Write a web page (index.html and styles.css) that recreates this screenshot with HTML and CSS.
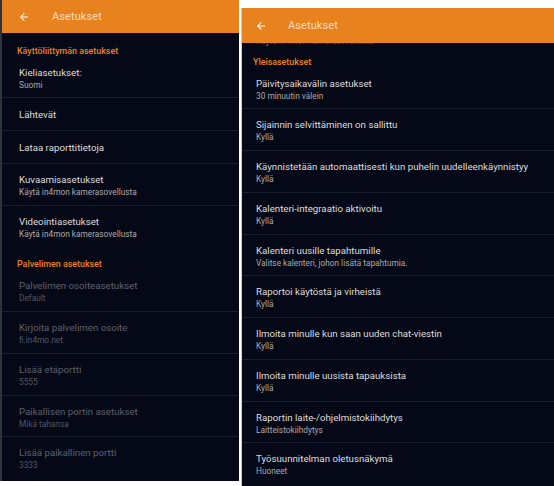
FILE: index.html
```html
<!DOCTYPE html>
<html lang="fi">
<head>
<meta charset="utf-8">
<title>Asetukset</title>
<link rel="stylesheet" href="styles.css">
</head>
<body>
<div class="page">
  <div class="phone phone-left">
    <header class="bar">
      <svg class="back" viewBox="0 0 24 24"><path d="M20 11H7.83l5.59-5.59L12 4l-8 8 8 8 1.41-1.41L7.83 13H20v-2z"/></svg>
      <span class="bar-title">Asetukset</span>
    </header>
    <div class="list">
      <div class="section">Käyttöliittymän asetukset</div>
      <div class="item"><div class="t">Kieliasetukset:</div><div class="s">Suomi</div></div>
      <div class="item single"><div class="t">Lähtevät</div></div>
      <div class="item single"><div class="t">Lataa raporttitietoja</div></div>
      <div class="item"><div class="t">Kuvaamisasetukset</div><div class="s">Käytä in4mon kamerasovellusta</div></div>
      <div class="item"><div class="t">Videointiasetukset</div><div class="s">Käytä in4mon kamerasovellusta</div></div>
      <div class="section">Palvelimen asetukset</div>
      <div class="item off"><div class="t">Palvelimen osoiteasetukset</div><div class="s">Default</div></div>
      <div class="item off"><div class="t">Kirjoita palvelimen osoite</div><div class="s">fi.in4mo.net</div></div>
      <div class="item off"><div class="t">Lisää etäportti</div><div class="s">5555</div></div>
      <div class="item off"><div class="t">Paikallisen portin asetukset</div><div class="s">Mikä tahansa</div></div>
      <div class="item off"><div class="t">Lisää paikallinen portti</div><div class="s">3333</div></div>
    </div>
  </div>
  <div class="phone phone-right">
    <header class="bar">
      <svg class="back" viewBox="0 0 24 24"><path d="M20 11H7.83l5.59-5.59L12 4l-8 8 8 8 1.41-1.41L7.83 13H20v-2z"/></svg>
      <span class="bar-title">Asetukset</span>
    </header>
    <div class="list">
      <div class="cutline"><div class="s">Käytä in4mon kamerasovellusta</div></div>
      <div class="section">Yleisasetukset</div>
      <div class="item"><div class="t">Päivitysaikavälin asetukset</div><div class="s">30 minuutin välein</div></div>
      <div class="item"><div class="t">Sijainnin selvittäminen on sallittu</div><div class="s">Kyllä</div></div>
      <div class="item"><div class="t">Käynnistetään automaattisesti kun puhelin uudelleenkäynnistyy</div><div class="s">Kyllä</div></div>
      <div class="item"><div class="t">Kalenteri-integraatio aktivoitu</div><div class="s">Kyllä</div></div>
      <div class="item"><div class="t">Kalenteri uusille tapahtumille</div><div class="s">Valitse kalenteri, johon lisätä tapahtumia.</div></div>
      <div class="item"><div class="t">Raportoi käytöstä ja virheistä</div><div class="s">Kyllä</div></div>
      <div class="item"><div class="t">Ilmoita minulle kun saan uuden chat-viestin</div><div class="s">Kyllä</div></div>
      <div class="item"><div class="t">Ilmoita minulle uusista tapauksista</div><div class="s">Kyllä</div></div>
      <div class="item"><div class="t">Raportin laite-/ohjelmistokiihdytys</div><div class="s">Laitteistokiihdytys</div></div>
      <div class="item"><div class="t">Työsuunnitelman oletusnäkymä</div><div class="s">Huoneet</div></div>
    </div>
  </div>
</div>
</body>
</html>
```

FILE: styles.css
```css
html, body {
  margin: 0;
  padding: 0;
  background: #ffffff;
}
body {
  font-family: Roboto, "Noto Sans", "Liberation Sans", sans-serif;
  width: 554px;
  height: 486px;
  overflow: hidden;
}
.page {
  display: flex;
  align-items: flex-start;
  height: 486px;
}
.phone {
  background: #050917;
  display: flex;
  flex-direction: column;
  overflow: hidden;
}
.phone-left {
  width: 237px;
  height: 481px;
  border-left: 2px solid #30333d;
}
.phone-right {
  width: 312px;
  height: 478px;
  margin-top: 8px;
  margin-left: 2px;
  border-left: 1px solid #c9c9c9;
}
.bar {
  background: #e8821e;
  display: flex;
  align-items: center;
  flex: none;
  position: relative;
  z-index: 1;
  box-shadow: 0 1px 1px rgba(0,0,0,0.55);
}
.phone-left .bar {
  height: 33px;
}
.phone-right .bar {
  height: 35px;
}
.back {
  width: 12px;
  height: 12px;
  fill: #ffffff;
  flex: none;
}
.phone-left .back { margin-left: 16px; }
.phone-right .back { margin-left: 13px; }
.bar-title {
  color: #f9dcc0;
  font-size: 11px;
  letter-spacing: 0.1px;
}
.phone-left .bar-title { margin-left: 22px; }
.phone-right .bar-title { margin-left: 21px; }
.list {
  display: flex;
  flex-direction: column;
}
.section {
  color: #e8821e;
  font-size: 8.9px;
  font-weight: 500;
  line-height: 11px;
  padding-top: 12.5px;
}
.phone-left .section { padding-left: 15px; }
.phone-right .section { padding-left: 11px; padding-top: 10.5px; }
.item {
  padding: 9px 0 6px 0;
}
.phone-left .item { padding-left: 17px; }
.phone-right .item { padding-left: 14px; }
.item + .item {
  border-top: 1px solid #1a1f2f;
}
.item.single {
  padding-top: 9.5px;
  padding-bottom: 9.5px;
}
.t {
  color: #dedede;
  font-size: 9.7px;
  line-height: 13px;
  white-space: nowrap;
}
.s {
  color: #a9a9ab;
  font-size: 8.3px;
  line-height: 12.75px;
  white-space: nowrap;
}
.item.off .t { color: #5c606b; }
.item.off .s { color: #535762; }
.cutline {
  height: 3px;
  overflow: hidden;
  padding-left: 14px;
}
.cutline .s {
  margin-top: -8px;
  line-height: 12px;
}
```
